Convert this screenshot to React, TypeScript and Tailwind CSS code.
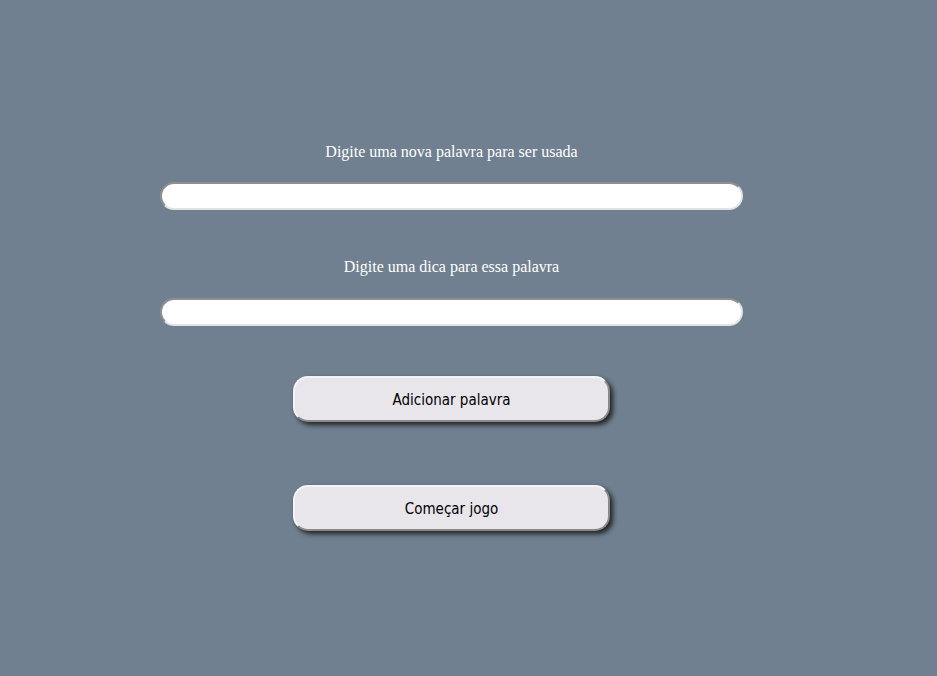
export default function App() {
  return (
    <div className="min-h-[676px] w-full bg-[#708090]">
      <div className="flex w-[903px] flex-col items-center pt-[143px]">
        {/* Word */}
        <p className="font-['Liberation_Serif',serif] text-[16px] leading-[18px] text-white">
          Digite uma nova palavra para ser usada
        </p>
        <input
          type="text"
          className="mt-[21px] h-[28px] w-[583px] rounded-full border-2 border-t-[#8f8f8f] border-l-[#8f8f8f] border-b-[#e3e3e3] border-r-[#e3e3e3] bg-white px-3 outline-none"
        />

        {/* Hint */}
        <p className="mt-[48px] font-['Liberation_Serif',serif] text-[16px] leading-[18px] text-white">
          Digite uma dica para essa palavra
        </p>
        <input
          type="text"
          className="mt-[22px] h-[28px] w-[583px] rounded-full border-2 border-t-[#8f8f8f] border-l-[#8f8f8f] border-b-[#e3e3e3] border-r-[#e3e3e3] bg-white px-3 outline-none"
        />

        {/* Actions */}
        <button className="mt-[50px] h-[46px] w-[317px] rounded-[15px] border-2 border-t-[#f4f4f4] border-l-[#f4f4f4] border-b-[#8a8a8a] border-r-[#8a8a8a] bg-[#e8e6eb] pt-[2px] font-['DejaVu_Sans_Condensed','DejaVu_Sans',sans-serif] text-[15px] text-black shadow-[3px_3px_5px_#222]">
          Adicionar palavra
        </button>
        <button className="mt-[63px] h-[46px] w-[317px] rounded-[15px] border-2 border-t-[#f4f4f4] border-l-[#f4f4f4] border-b-[#8a8a8a] border-r-[#8a8a8a] bg-[#e8e6eb] pt-[2px] font-['DejaVu_Sans_Condensed','DejaVu_Sans',sans-serif] text-[15px] text-black shadow-[3px_3px_5px_#222]">
          Começar jogo
        </button>
      </div>
    </div>
  );
}
